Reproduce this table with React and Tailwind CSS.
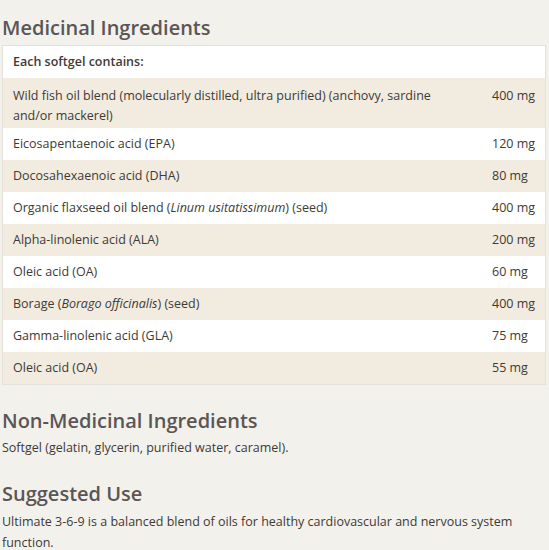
import React from 'react';

const rows = [
  { name: 'Wild fish oil blend (molecularly distilled, ultra purified) (anchovy, sardine and/or mackerel)', amount: '400 mg', tall: true },
  { name: 'Eicosapentaenoic acid (EPA)', amount: '120 mg' },
  { name: 'Docosahexaenoic acid (DHA)', amount: '80 mg' },
  { name: (<>Organic flaxseed oil blend (<i>Linum usitatissimum</i>) (seed)</>), amount: '400 mg' },
  { name: 'Alpha-linolenic acid (ALA)', amount: '200 mg' },
  { name: 'Oleic acid (OA)', amount: '60 mg' },
  { name: (<>Borage (<i>Borago officinalis</i>) (seed)</>), amount: '400 mg' },
  { name: 'Gamma-linolenic acid (GLA)', amount: '75 mg' },
  { name: 'Oleic acid (OA)', amount: '55 mg' },
];

const App = () => {
  return (
    <div className="w-[549px] h-[550px] overflow-hidden bg-[#f3f1eb] text-[#3e3a36] font-['Open_Sans',sans-serif]">
      {/* Medicinal */}
      <h2 className="pl-[2px] pt-[13px] h-[45px] text-[20px] leading-[30px] font-semibold text-[#5b5656]">
        Medicinal Ingredients
      </h2>
      <div className="ml-[2px] w-[544px] border border-[#e6e1d8] text-[12.5px]">
        <div className="h-[32px] flex items-center px-[10px] bg-white font-semibold">
          Each softgel contains:
        </div>
        {rows.map((r, i) => (
          <div
            key={i}
            className={`flex ${r.tall ? 'h-[50px] pt-[8px]' : 'h-[32px] items-center'} ${i % 2 === 0 ? 'bg-[#f1ebe0]' : 'bg-white'}`}
          >
            <div className="pl-[10px] w-[470px] leading-[20px]">{r.name}</div>
            <div className="pl-[19px] leading-[20px]">{r.amount}</div>
          </div>
        ))}
      </div>

      {/* Non-medicinal */}
      <h2 className="pl-[2px] mt-[21px] text-[20px] leading-[30px] font-semibold text-[#5b5656]">
        Non-Medicinal Ingredients
      </h2>
      <p className="pl-[2px] text-[12.5px] leading-[24px]">
        Softgel (gelatin, glycerin, purified water, caramel).
      </p>

      {/* Suggested use */}
      <h2 className="pl-[2px] mt-[19px] text-[20px] leading-[30px] font-semibold text-[#5b5656]">
        Suggested Use
      </h2>
      <p className="pl-[2px] pr-[20px] text-[12.5px] leading-[21px] pt-[2px]">
        Ultimate 3-6-9 is a balanced blend of oils for healthy cardiovascular and nervous system function.
      </p>
    </div>
  );
};

export default App;
